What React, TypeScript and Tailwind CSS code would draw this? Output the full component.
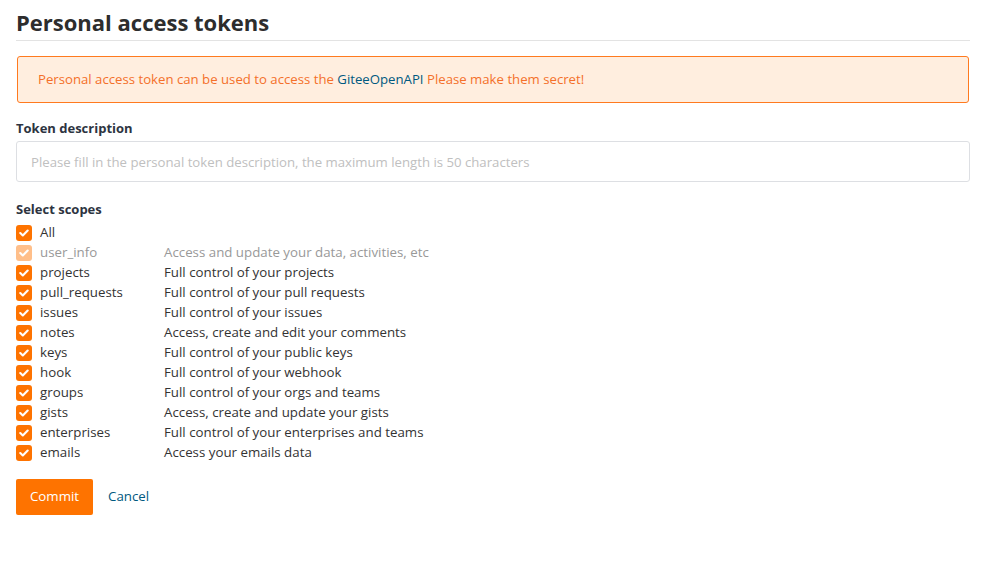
import React from "react";

const scopes: [string, string, boolean?][] = [
  ["user_info", "Access and update your data, activities, etc", true],
  ["projects", "Full control of your projects"],
  ["pull_requests", "Full control of your pull requests"],
  ["issues", "Full control of your issues"],
  ["notes", "Access, create and edit your comments"],
  ["keys", "Full control of your public keys"],
  ["hook", "Full control of your webhook"],
  ["groups", "Full control of your orgs and teams"],
  ["gists", "Access, create and update your gists"],
  ["enterprises", "Full control of your enterprises and teams"],
  ["emails", "Access your emails data"],
];

function Check({ disabled }: { disabled?: boolean }) {
  return (
    <span
      className={`flex h-4 w-4 shrink-0 items-center justify-center rounded-[3px] ${
        disabled ? "bg-[#ffbf8a]" : "bg-[#fe7300]"
      }`}
    >
      <svg width="10" height="8" viewBox="0 0 10 8" fill="none">
        <path d="M1.3 4.1 L3.8 6.5 L8.7 1.5" stroke="white" strokeWidth="2.1" strokeLinecap="round" strokeLinejoin="round" />
      </svg>
    </span>
  );
}

export default function App() {
  return (
    <div className="min-h-[567px] bg-white px-4 text-[#333] [font-family:'Open_Sans',sans-serif]">
      <div className="w-[954px]">
        <h1 className="border-b border-[#e3e3e3] pt-[8px] pb-[4px] text-[22px] font-bold leading-[28px] text-[#2d2d2d]">
          Personal access tokens
        </h1>
        <div className="mt-[15px] ml-[1px] mr-[1px] flex h-[47px] items-center rounded-[3px] border border-[#ff7a1f] bg-[#ffeedf] px-5 text-[13.2px] text-[#f4702a]">
          <span>
            Personal access token can be used to access the{" "}
            <span className="text-[#005980]">GiteeOpenAPI</span> Please make them secret!
          </span>
        </div>
        <div className="mt-[15px] text-[13px] font-bold leading-[20px] text-[#2d3441]">Token description</div>
        <input
          className="mt-[3px] block h-[41px] w-full rounded-[3px] border border-[#dddfe3] px-[14px] text-[13.2px] outline-none placeholder:text-[#c0c0c0]"
          placeholder="Please fill in the personal token description, the maximum length is 50 characters"
        />
        <div className="mt-[17px] text-[13px] font-bold leading-[20px] text-[#2d3441]">Select scopes</div>
        <div className="mt-[4px] flex h-5 items-center gap-2 text-[13.3px] text-[#333]">
          <Check />
          <span>All</span>
        </div>
        {scopes.map(([name, desc, dis]) => (
          <div key={name} className={`flex h-5 items-center text-[13.3px] ${dis ? "text-[#999]" : "text-[#333]"}`}>
            <Check disabled={dis} />
            <span className="ml-2 w-[124px]">{name}</span>
            <span>{desc}</span>
          </div>
        ))}
        <div className="mt-[16px] flex items-center">
          <button className="h-[36px] w-[77px] rounded-[2px] bg-[#fe7300] text-[13.3px] text-white">Commit</button>
          <span className="ml-[15px] text-[13.3px] text-[#005980]">Cancel</span>
        </div>
      </div>
    </div>
  );
}
